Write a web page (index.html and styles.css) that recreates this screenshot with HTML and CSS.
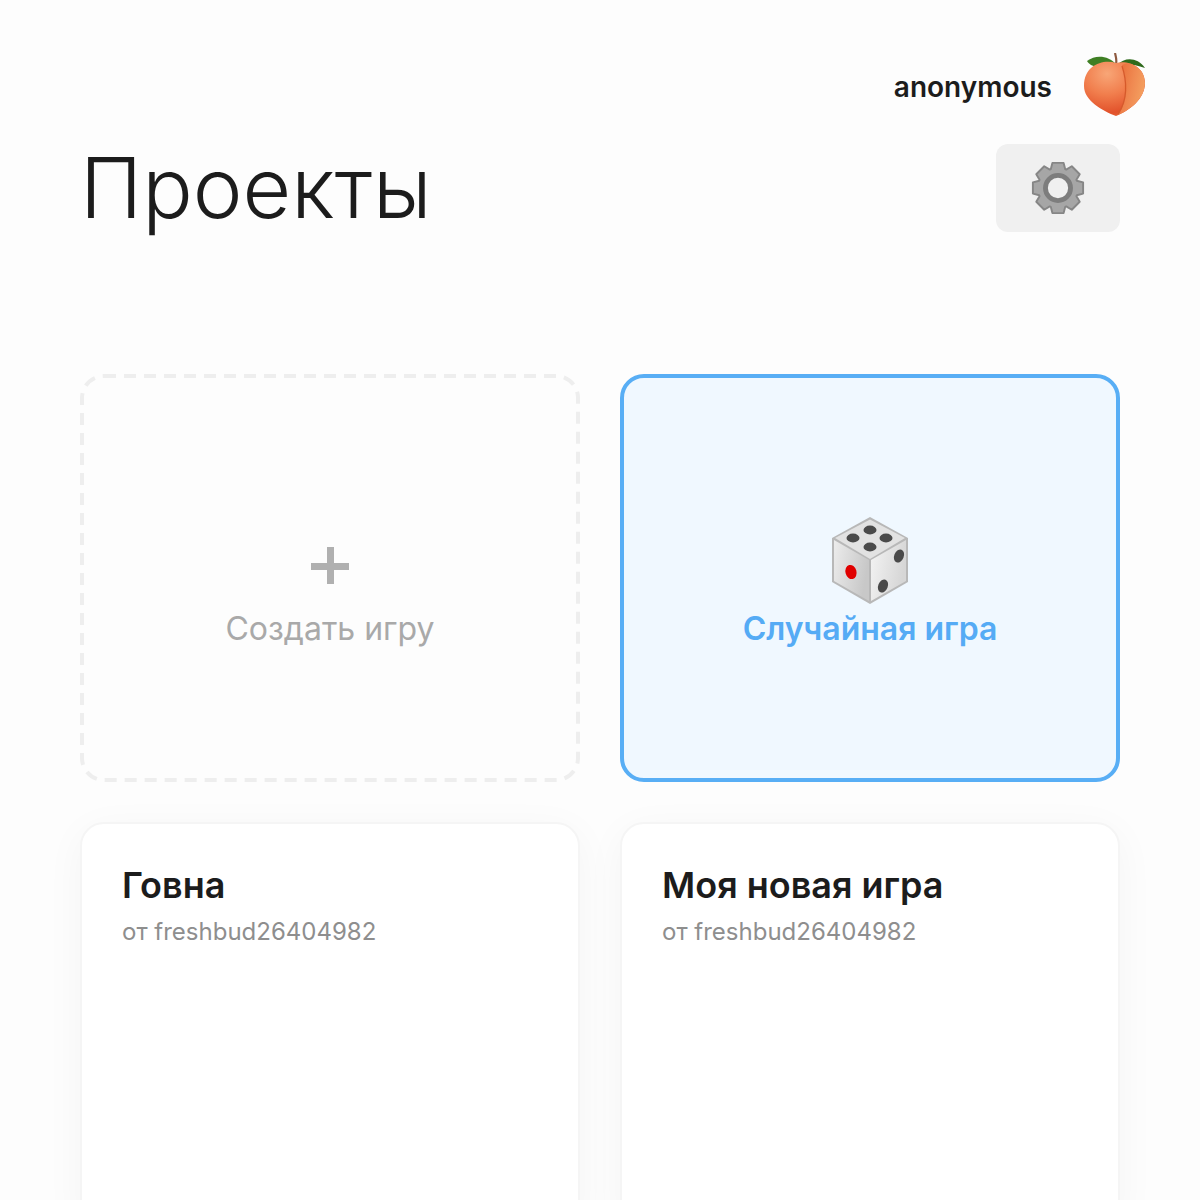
FILE: index.html
```html
<!DOCTYPE html>
<html lang="ru">
<head>
    <meta charset="UTF-8">
    <title>Проекты</title>
    <link rel="stylesheet" href="styles.css">
</head>
<body>

<div class="page">
    <div class="user-row">
        <span class="user-name">anonymous</span>
        <svg class="user-avatar" viewBox="0 0 64 64" width="64" height="64">
            <defs>
                <radialGradient id="peach-left" cx="0.38" cy="0.22" r="0.85">
                    <stop offset="0" stop-color="#f8a677"/>
                    <stop offset="0.45" stop-color="#f17e4d"/>
                    <stop offset="0.85" stop-color="#e2522b"/>
                    <stop offset="1" stop-color="#e86a38"/>
                </radialGradient>
                <linearGradient id="peach-right" x1="0" y1="0.3" x2="1" y2="0.7">
                    <stop offset="0" stop-color="#e96f3a"/>
                    <stop offset="0.5" stop-color="#f08a52"/>
                    <stop offset="1" stop-color="#f5a462"/>
                </linearGradient>
                <filter id="peach-soft" x="-20%" y="-20%" width="140%" height="140%">
                    <feGaussianBlur stdDeviation="0.6"/>
                </filter>
                <clipPath id="peach-clip">
                    <path d="M33 10C20 6 1 12 1 33 1 48 20 58 33 63 46 58 62 46 62 30 62 14 46 7 33 10Z"/>
                </clipPath>
            </defs>
            <path d="M33 11C26 3 13 1 4 8 8 15 22 17 33 11Z" fill="#3f7f24"/>
            <path d="M34 12C42 4 54 4 62 15 52 11 43 11 34 12Z" fill="#2f6a1c"/>
            <path d="M33 11C34 7 33 4 32 0" fill="none" stroke="#8e5a40" stroke-width="2.200"/>
            <path d="M33 10C20 6 1 12 1 33 1 48 20 58 33 63 46 58 62 46 62 30 62 14 46 7 33 10Z" fill="url(#peach-left)"/>
            <g clip-path="url(#peach-clip)">
                <path d="M39 12C47 7 62 14 62 30 62 46 46 58 35 62 43 52 46 30 39 12Z" fill="url(#peach-right)"/>
                <path d="M39 13C44 28 45 47 35 61" fill="none" stroke="#d65a2c" stroke-width="1.300" filter="url(#peach-soft)"/>
            </g>
        </svg>
    </div>

    <div class="title-row">
        <h1 class="title">Проекты</h1>
        <button class="settings-button">
            <svg viewBox="-29 -29 58 58" width="56" height="56">
                <path class="gear-body" d="M-7.5 -19.5L-5.8 -26H5.8L7.5 -19.5L8.49 -19.09L14.28 -22.49L22.49 -14.28L19.09 -8.49L19.5 -7.5L26 -5.8V5.8L19.5 7.5L19.09 8.49L22.49 14.28L14.28 22.49L8.49 19.09L7.5 19.5L5.8 26H-5.8L-7.5 19.5L-8.49 19.09L-14.28 22.49L-22.49 14.28L-19.09 8.49L-19.5 7.5L-26 5.8V-5.8L-19.5 -7.5L-19.09 -8.49L-22.49 -14.28L-14.28 -22.49L-8.49 -19.09Z"/>
                <circle class="gear-ring" r="13"/>
            </svg>
        </button>
    </div>

    <div class="card-grid">
        <div class="card card-create">
            <svg class="dashes" viewBox="0 0 500 408" width="500" height="408">
                <rect x="2" y="2" width="496" height="404" rx="22"/>
            </svg>
            <div class="card-icon">
                <div class="plus"></div>
            </div>
            <div class="card-label">Создать игру</div>
        </div>

        <div class="card card-random">
            <div class="card-icon">
                <svg class="die" viewBox="0 0 80 92" width="80" height="92">
                    <defs>
                        <linearGradient id="die-left" x1="0" y1="0" x2="1" y2="0.3">
                            <stop offset="0" stop-color="#ececec"/>
                            <stop offset="1" stop-color="#c8c8c8"/>
                        </linearGradient>
                        <linearGradient id="die-right" x1="0" y1="0" x2="1" y2="0.3">
                            <stop offset="0" stop-color="#f4f4f4"/>
                            <stop offset="1" stop-color="#d6d6d6"/>
                        </linearGradient>
                    </defs>
                    <path d="M39 2L77 23V67L39 89 1 67V23Z" fill="#b8b8b8"/>
                    <path d="M39 4.500L74 23 39 44 4 23Z" fill="#e2e2e2"/>
                    <path d="M3 25L38 45V86L3 66Z" fill="url(#die-left)"/>
                    <path d="M75 25L40 45V86L75 66Z" fill="url(#die-right)"/>
                    <ellipse cx="39" cy="15" rx="6.500" ry="4.400" fill="#4a4a4a"/>
                    <ellipse cx="22" cy="23" rx="6.500" ry="4.400" fill="#4a4a4a"/>
                    <ellipse cx="55" cy="23" rx="6.500" ry="4.400" fill="#4a4a4a"/>
                    <ellipse cx="39" cy="32" rx="6.500" ry="4.400" fill="#4a4a4a"/>
                    <ellipse cx="20" cy="57" rx="5.500" ry="7.200" fill="#e00000" transform="rotate(-15 20 57)"/>
                    <ellipse cx="68" cy="41" rx="4.800" ry="6.800" fill="#4a4a4a" transform="rotate(22 68 41)"/>
                    <ellipse cx="52" cy="71" rx="4.800" ry="6.800" fill="#4a4a4a" transform="rotate(22 52 71)"/>
                </svg>
            </div>
            <div class="card-label">Случайная игра</div>
        </div>

        <div class="card card-project">
            <div class="project-name">Говна</div>
            <div class="project-author">от freshbud26404982</div>
        </div>

        <div class="card card-project">
            <div class="project-name">Моя новая игра</div>
            <div class="project-author">от freshbud26404982</div>
        </div>
    </div>
</div>

</body>
</html>
```

FILE: styles.css
```css
* {
    box-sizing: border-box;
}

html, body {
    margin: 0;
    height: 100%;
    overflow: hidden;
    background-color: #fdfdfd;
    font-family: Inter, "Liberation Sans", sans-serif;
    color: #1c1c1c;
}

.page {
    padding: 53px 80px 0 80px;
}

.user-row {
    display: flex;
    align-items: center;
    justify-content: flex-end;
    gap: 31px;
    margin-right: -27px;
    height: 64px;
}

.user-name {
    margin-top: 4px;
    font-size: 28px;
    font-weight: 600;
}

.title-row {
    display: flex;
    align-items: flex-start;
    justify-content: space-between;
    margin-top: 27px;
    height: 230px;
}

.title {
    margin: 0;
    font-size: 84px;
    font-weight: 300;
    line-height: 88px;
}

.settings-button {
    display: flex;
    align-items: center;
    justify-content: center;
    width: 124px;
    height: 88px;
    padding: 0;
    border: none;
    border-radius: 12px;
    background-color: #f0f0f0;
}

.gear-body {
    fill: #a6a6a6;
    stroke: #868686;
    stroke-width: 2;
    stroke-linejoin: round;
}

.gear-ring {
    fill: #f0f0f0;
    stroke: #7d7d7d;
    stroke-width: 5;
}

.card-grid {
    display: grid;
    grid-template-columns: 500px 500px;
    grid-auto-rows: 408px;
    gap: 40px;
}

.card {
    position: relative;
    border-radius: 24px;
}

.card-create,
.card-random {
    display: flex;
    flex-direction: column;
    align-items: center;
    justify-content: center;
    padding-top: 10px;
}

.dashes {
    position: absolute;
    top: 0;
    left: 0;
}

.dashes rect {
    fill: none;
    stroke: #eeeeee;
    stroke-width: 4;
    stroke-dasharray: 12 8;
}

.card-icon {
    display: flex;
    align-items: center;
    justify-content: center;
    height: 92px;
}

.die {
    margin: 0 0 4px 2px;
}

.plus {
    position: relative;
    width: 38px;
    height: 37px;
    margin-top: 4px;
}

.plus:before,
.plus:after {
    content: " ";
    position: absolute;
    background-color: #b0b0b0;
}

.plus:before {
    left: 0;
    right: 0;
    top: 16px;
    height: 7px;
}

.plus:after {
    top: 0;
    bottom: 0;
    left: 16px;
    width: 7px;
}

.card-label {
    font-size: 32px;
    line-height: 40px;
}

.card-create .card-label {
    color: #a9a9a9;
}

.card-random {
    border: 4px solid #58aef5;
    background-color: #f0f8ff;
}

.card-random .card-label {
    color: #55abf5;
    font-weight: 600;
}

.card-project {
    padding: 39px 40px;
    border: 2px solid #f5f5f5;
    background-color: #fff;
    box-shadow: 0 8px 40px rgba(0, 0, 0, 0.04);
}

.project-name {
    font-size: 36px;
    font-weight: 600;
    line-height: 44px;
}

.project-author {
    margin-top: 9px;
    font-size: 24px;
    line-height: 32px;
    color: #8e8e8e;
}
```
